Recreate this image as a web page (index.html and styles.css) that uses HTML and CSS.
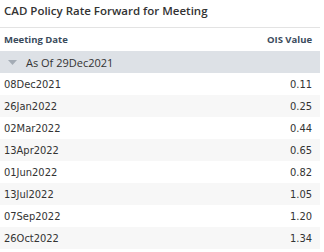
FILE: index.html
```html
<!DOCTYPE html>
<html>
<head>
<meta charset="utf-8">
<link rel="stylesheet" href="styles.css">
</head>
<body>
<div class="panel">
  <div class="title">CAD Policy Rate Forward for Meeting</div>
  <div class="grid">
    <div class="row head">
      <div class="c1">Meeting Date</div>
      <div class="c2">OIS Value</div>
    </div>
    <div class="row group">
      <svg class="tri" width="9" height="5" viewBox="0 0 9 5"><path d="M0 0H9L4.5 5Z" fill="#a4acb5"/></svg>
      <span class="glabel">As Of 29Dec2021</span>
    </div>
    <div class="row"><div class="c1">08Dec2021</div><div class="c2">0.11</div></div>
    <div class="row alt"><div class="c1">26Jan2022</div><div class="c2">0.25</div></div>
    <div class="row"><div class="c1">02Mar2022</div><div class="c2">0.44</div></div>
    <div class="row alt"><div class="c1">13Apr2022</div><div class="c2">0.65</div></div>
    <div class="row"><div class="c1">01Jun2022</div><div class="c2">0.82</div></div>
    <div class="row alt"><div class="c1">13Jul2022</div><div class="c2">1.05</div></div>
    <div class="row"><div class="c1">07Sep2022</div><div class="c2">1.20</div></div>
    <div class="row alt"><div class="c1">26Oct2022</div><div class="c2">1.34</div></div>
  </div>
</div>
</body>
</html>
```
FILE: styles.css
```css
html, body { margin: 0; padding: 0; background: #fff; }
.panel { width: 320px; }
.title {
  font-family: "Open Sans", sans-serif;
  font-weight: 600;
  font-size: 11.5px;
  color: #333;
  height: 28px;
  line-height: 22px;
  padding-left: 4px;
  border-bottom: 1px solid #e3e3e3;
  box-sizing: border-box;
}
.grid { display: flex; flex-direction: column; }
.row {
  display: flex;
  align-items: center;
  height: 22px;
  font-family: "DejaVu Sans Condensed", "DejaVu Sans", sans-serif;
  font-size: 11px;
  color: #333;
}
.row.alt { background: #f7f7f7; }
.c1 { flex: 1; padding-left: 4px; }
.c2 { padding-right: 8px; text-align: right; }
.head {
  height: 23px;
  font-family: "Open Sans", sans-serif;
  font-weight: 700;
  font-size: 9.5px;
  color: #3b4b5c;
}
.group {
  background: #dde1e6;
  font-family: "Open Sans", sans-serif;
  font-size: 11px;
  color: #333;
}
.tri { margin-left: 8px; margin-right: 9px; }
```
